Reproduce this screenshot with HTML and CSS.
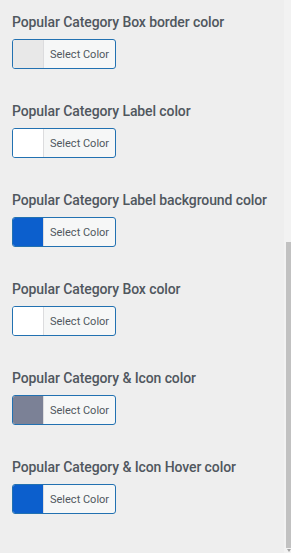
FILE: index.html
```html
<!DOCTYPE html>
<html lang="en">
<head>
    <meta charset="UTF-8">
    <meta name="viewport" content="width=device-width, initial-scale=1.0">
    <title>Popular Category Colors</title>
    <link rel="stylesheet" href="styles.css">
</head>
<body>
    <div class="panel">
        <div class="control">
            <h3 class="control-title">Popular Category Box border color</h3>
            <button class="color-picker" type="button">
                <span class="swatch swatch-light"></span>
                <span class="picker-label">Select Color</span>
            </button>
        </div>
        <div class="control">
            <h3 class="control-title">Popular Category Label color</h3>
            <button class="color-picker" type="button">
                <span class="swatch swatch-white"></span>
                <span class="picker-label">Select Color</span>
            </button>
        </div>
        <div class="control">
            <h3 class="control-title">Popular Category Label background color</h3>
            <button class="color-picker" type="button">
                <span class="swatch swatch-blue"></span>
                <span class="picker-label">Select Color</span>
            </button>
        </div>
        <div class="control">
            <h3 class="control-title">Popular Category Box color</h3>
            <button class="color-picker" type="button">
                <span class="swatch swatch-white"></span>
                <span class="picker-label">Select Color</span>
            </button>
        </div>
        <div class="control">
            <h3 class="control-title">Popular Category &amp; Icon color</h3>
            <button class="color-picker" type="button">
                <span class="swatch swatch-gray"></span>
                <span class="picker-label">Select Color</span>
            </button>
        </div>
        <div class="control">
            <h3 class="control-title">Popular Category &amp; Icon Hover color</h3>
            <button class="color-picker" type="button">
                <span class="swatch swatch-blue"></span>
                <span class="picker-label">Select Color</span>
            </button>
        </div>
    </div>

    <!-- scrollbar of the customizer pane -->
    <div class="scroll-track">
        <div class="scroll-thumb"></div>
        <div class="scroll-arrow"></div>
    </div>
</body>
</html>
```

FILE: styles.css
```css
html, body {
    margin: 0;
    padding: 0;
    height: 100%;
}
body {
    background-color: #eeeeee;
    font-family: Roboto, "Liberation Sans", Arial, sans-serif;
    overflow: hidden;
}
.panel {
    padding: 12px 12px 0 12px;
}
.control {
    margin-bottom: 32px;
}
.control-title {
    margin: 0 0 7px 0;
    font-size: 14px;
    line-height: 20px;
    font-weight: 500;
    letter-spacing: -0.1px;
    color: #50575e;
    white-space: nowrap;
}
.color-picker {
    display: flex;
    align-items: stretch;
    width: 104px;
    height: 30px;
    padding: 0;
    margin: 0;
    border: 1px solid #2271b1;
    border-radius: 3px;
    background-color: #f6f7f7;
    overflow: hidden;
    cursor: pointer;
    font-family: inherit;
}
.swatch {
    width: 30px;
    flex-shrink: 0;
    border-right: 1px solid #dcdcde;
}
.swatch-light {
    background-color: #e8e8e8;
}
.swatch-white {
    background-color: #ffffff;
}
.swatch-blue {
    background-color: #0c5fcd;
}
.swatch-gray {
    background-color: #7b8196;
}
.picker-label {
    display: flex;
    align-items: center;
    padding-left: 6px;
    font-size: 11px;
    color: #50575e;
}
.scroll-track {
    position: fixed;
    top: 0;
    right: 0;
    width: 7px;
    height: 100%;
    background-color: #f2f2f2;
}
.scroll-thumb {
    position: absolute;
    top: 242px;
    left: 2px;
    width: 5px;
    height: 306px;
    background-color: #c1c1c1;
}
.scroll-arrow {
    position: absolute;
    top: 549px;
    left: 3px;
    width: 0;
    height: 0;
    border-left: 2px solid transparent;
    border-right: 2px solid transparent;
    border-top: 3px solid #a3a3a3;
}
```
